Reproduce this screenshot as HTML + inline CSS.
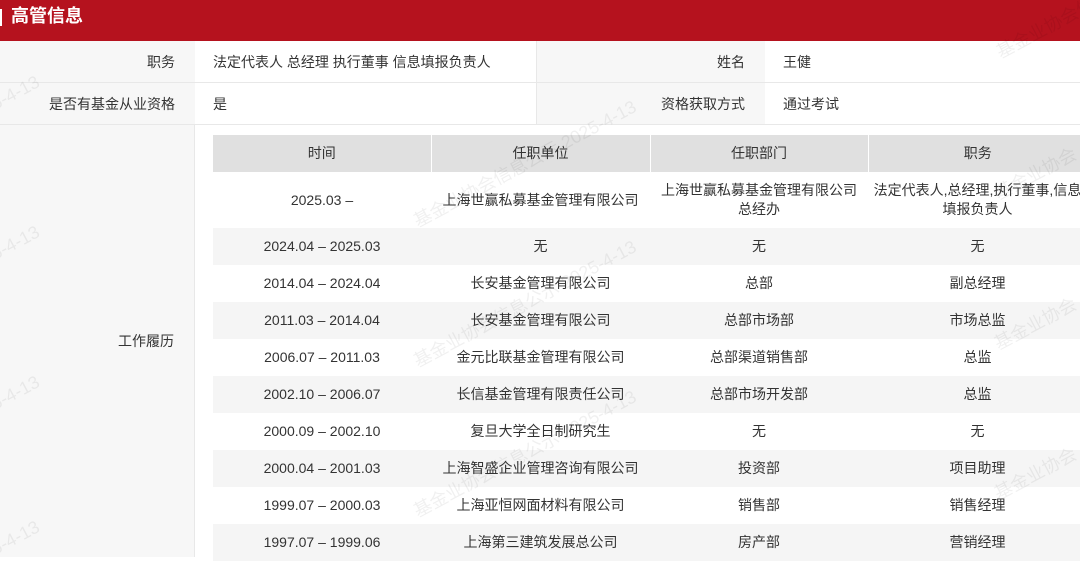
<!DOCTYPE html>
<html><head><meta charset="utf-8"><style>
body{margin:0;width:1080px;height:557px;overflow:hidden;background:#fff;font-family:"Liberation Sans","Noto Sans CJK SC",sans-serif;font-size:14px;color:#333;position:relative}
.hd{position:absolute;left:0;top:0;width:1080px;height:41px;background:#b5121e;color:#fff;font-weight:bold;font-size:18px;line-height:33px}
.hd i{position:absolute;left:0;top:9px;width:2px;height:17px;background:#fff}
.hd span{position:absolute;left:11px}
.c{position:absolute;box-sizing:border-box;line-height:normal;display:flex;align-items:center}
.lb{background:#f7f7f7;justify-content:flex-end;padding-right:20px;border-bottom:1px solid #e8e8e8}
.v{background:#fff;padding-left:18px;border-bottom:1px solid #e8e8e8}
table{position:absolute;left:213px;top:135px;border-collapse:collapse;table-layout:fixed;width:874px}
td,th{text-align:center;font-weight:normal;padding:0;line-height:19px}
th{background:#e0e0e0;height:37px;border-left:1px solid #fff}
th:first-child{border-left:none}
tr.g td{background:#f5f5f5}
td{height:37px}
.wm{position:absolute;color:rgba(0,0,0,0.06);font-size:18px;transform:rotate(-28deg);white-space:nowrap;pointer-events:none}
</style></head><body>
<div class="hd"><i></i><span>高管信息</span></div>
<div class="c lb" style="left:0;top:41px;width:195px;height:42px">职务</div>
<div class="c v" style="left:195px;top:41px;width:342px;height:42px;border-right:1px solid #e8e8e8">法定代表人 总经理 执行董事 信息填报负责人</div>
<div class="c lb" style="left:537px;top:41px;width:228px;height:42px">姓名</div>
<div class="c v" style="left:765px;top:41px;width:315px;height:42px">王健</div>
<div class="c lb" style="left:0;top:83px;width:195px;height:42px">是否有基金从业资格</div>
<div class="c v" style="left:195px;top:83px;width:342px;height:42px;border-right:1px solid #e8e8e8">是</div>
<div class="c lb" style="left:537px;top:83px;width:228px;height:42px">资格获取方式</div>
<div class="c v" style="left:765px;top:83px;width:315px;height:42px">通过考试</div>
<div class="c lb" style="left:0;top:125px;width:195px;height:432px;border-right:1px solid #e8e8e8;border-bottom:none">工作履历</div>
<table>
<colgroup><col style="width:218px"><col style="width:219px"><col style="width:218px"><col style="width:219px"></colgroup>
<tr><th>时间</th><th>任职单位</th><th>任职部门</th><th>职务</th></tr>
<tr><td style="height:56px">2025.03 –</td><td>上海世赢私募基金管理有限公司</td><td>上海世赢私募基金管理有限公司<br>总经办</td><td>法定代表人,总经理,执行董事,信息<br>填报负责人</td></tr>
<tr class="g"><td>2024.04 – 2025.03</td><td>无</td><td>无</td><td>无</td></tr>
<tr><td>2014.04 – 2024.04</td><td>长安基金管理有限公司</td><td>总部</td><td>副总经理</td></tr>
<tr class="g"><td>2011.03 – 2014.04</td><td>长安基金管理有限公司</td><td>总部市场部</td><td>市场总监</td></tr>
<tr><td>2006.07 – 2011.03</td><td>金元比联基金管理有限公司</td><td>总部渠道销售部</td><td>总监</td></tr>
<tr class="g"><td>2002.10 – 2006.07</td><td>长信基金管理有限责任公司</td><td>总部市场开发部</td><td>总监</td></tr>
<tr><td>2000.09 – 2002.10</td><td>复旦大学全日制研究生</td><td>无</td><td>无</td></tr>
<tr class="g"><td>2000.04 – 2001.03</td><td>上海智盛企业管理咨询有限公司</td><td>投资部</td><td>项目助理</td></tr>
<tr><td>1999.07 – 2000.03</td><td>上海亚恒网面材料有限公司</td><td>销售部</td><td>销售经理</td></tr>
<tr class="g"><td>1997.07 – 1999.06</td><td>上海第三建筑发展总公司</td><td>房产部</td><td>营销经理</td></tr>
</table>
<div class="wm" style="left:400px;top:150px">基金业协会信息公示 2025-4-13</div>
<div class="wm" style="left:400px;top:290px">基金业协会信息公示 2025-4-13</div>
<div class="wm" style="left:400px;top:440px">基金业协会信息公示 2025-4-13</div>
<div class="wm" style="left:990px;top:10px">基金业协会信息</div>
<div class="wm" style="left:990px;top:160px">基金业协会</div>
<div class="wm" style="left:990px;top:310px">基金业协会</div>
<div class="wm" style="left:990px;top:460px">基金业协会</div>
<div class="wm" style="left:-20px;top:85px">25-4-13</div>
<div class="wm" style="left:-20px;top:235px">25-4-13</div>
<div class="wm" style="left:-20px;top:385px">25-4-13</div>
<div class="wm" style="left:-20px;top:530px">25-4-13</div>
</body></html>
